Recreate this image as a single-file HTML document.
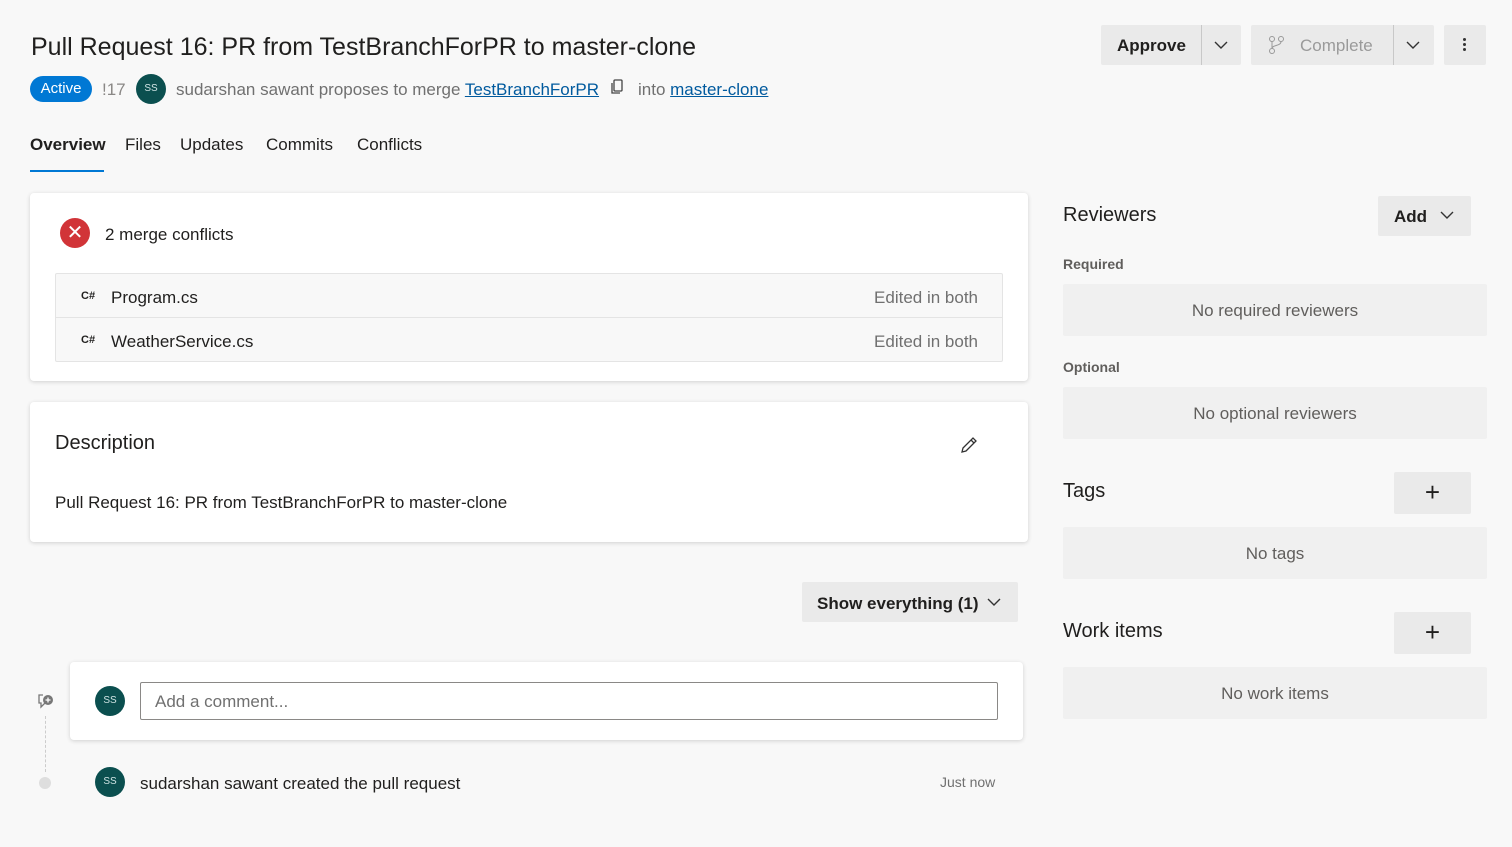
<!DOCTYPE html>
<html><head><meta charset="utf-8"><style>
*{box-sizing:border-box;margin:0;padding:0}
body{width:1512px;height:847px;background:#f8f8f8;font-family:"Liberation Sans",sans-serif;color:#201f1e;position:relative;overflow:hidden}
.a{position:absolute}
.card{position:absolute;background:#fff;border-radius:4px;box-shadow:0 1px 4px rgba(0,0,0,.16)}
.btn{position:absolute;background:#eaeaea;border-radius:2px}
.av{position:absolute;width:30px;height:30px;border-radius:50%;background:#0b4f4f;color:#cfe3e3;font-size:10px;text-align:center;line-height:30px}
.gray{position:absolute;background:#f0f0f0;border-radius:2px;color:#605e5c;font-size:17px;text-align:center}
a{color:#005a9e;text-decoration:underline}
</style></head><body>
<div class="a" style="left:31px;top:33px;font-size:25px;">Pull Request 16: PR from TestBranchForPR to master-clone</div>
<div class="a" style="left:30px;top:76px;width:62px;height:26px;border-radius:13px;background:#0078d4;color:#fff;font-size:15px;text-align:center;line-height:26px">Active</div>
<div class="a" style="left:102px;top:80px;font-size:17px;color:#8a8886">!17</div>
<div class="av" style="left:136px;top:74px">SS</div>
<div class="a" style="left:176px;top:80px;font-size:17px;color:#707070">sudarshan sawant proposes to merge <a>TestBranchForPR</a></div>
<svg class="a" style="left:610px;top:79px" width="14" height="16" viewBox="0 0 14 16"><rect x="4" y="1" width="8" height="11" rx="1" fill="none" stroke="#444" stroke-width="1.3"/><path d="M2 4v10h8" fill="none" stroke="#444" stroke-width="1.3"/></svg>
<div class="a" style="left:638px;top:80px;font-size:17px;color:#707070">into <a>master-clone</a></div>
<div class="a" style="left:30px;top:135px;font-size:17px;font-weight:bold">Overview</div>
<div class="a" style="left:30px;top:170px;width:74px;height:2px;background:#0078d4"></div>
<div class="a" style="left:125px;top:135px;font-size:17px">Files</div>
<div class="a" style="left:180px;top:135px;font-size:17px">Updates</div>
<div class="a" style="left:266px;top:135px;font-size:17px">Commits</div>
<div class="a" style="left:357px;top:135px;font-size:17px">Conflicts</div>

<div class="btn" style="left:1101px;top:25px;width:140px;height:40px"></div>
<div class="a" style="left:1201px;top:25px;width:1px;height:40px;background:#c8c8c8"></div>
<div class="a" style="left:1117px;top:36px;font-size:17px;font-weight:bold">Approve</div>
<svg class="a" style="left:1214px;top:41px" width="14" height="9"><path d="M1 1l6 6 6-6" fill="none" stroke="#333" stroke-width="1.4"/></svg>
<div class="btn" style="left:1251px;top:25px;width:183px;height:40px"></div>
<div class="a" style="left:1393px;top:25px;width:1px;height:40px;background:#c8c8c8"></div>
<svg class="a" style="left:1268px;top:35px" width="18" height="20" viewBox="0 0 18 20"><circle cx="4" cy="4" r="2.5" fill="none" stroke="#999"/><circle cx="13" cy="4" r="2.5" fill="none" stroke="#999"/><circle cx="4" cy="16" r="2.5" fill="none" stroke="#999"/><path d="M4 6.5v7M13 6.5c0 5-9 3-9 7" fill="none" stroke="#999"/></svg>
<div class="a" style="left:1300px;top:36px;font-size:17px;color:#9a9a9a">Complete</div>
<svg class="a" style="left:1406px;top:41px" width="14" height="9"><path d="M1 1l6 6 6-6" fill="none" stroke="#333" stroke-width="1.4"/></svg>
<div class="btn" style="left:1444px;top:25px;width:42px;height:40px"></div>
<div class="a" style="left:1463px;top:38px;width:3px;height:3px;background:#333;border-radius:50%;box-shadow:0 5px 0 #333,0 10px 0 #333"></div>

<div class="card" style="left:30px;top:193px;width:998px;height:188px">
 <div class="a" style="left:30px;top:25px;width:30px;height:30px;border-radius:50%;background:#d13438;color:#fff;text-align:center;line-height:30px;font-size:20px">✕</div>
 <div class="a" style="left:75px;top:32px;font-size:17px">2 merge conflicts</div>
 <div class="a" style="left:25px;top:80px;width:948px;height:89px;border:1px solid #e4e4e4;border-radius:2px;background:#f8f8f8">
  <div class="a" style="left:0;top:43px;width:946px;height:1px;background:#e4e4e4"></div>
  <div class="a" style="left:25px;top:16px;font-size:11px;font-weight:bold">C#</div>
  <div class="a" style="left:55px;top:14px;font-size:17px">Program.cs</div>
  <div class="a" style="right:24px;top:14px;font-size:17px;color:#707070">Edited in both</div>
  <div class="a" style="left:25px;top:60px;font-size:11px;font-weight:bold">C#</div>
  <div class="a" style="left:55px;top:58px;font-size:17px">WeatherService.cs</div>
  <div class="a" style="right:24px;top:58px;font-size:17px;color:#707070">Edited in both</div>
 </div>
</div>

<div class="card" style="left:30px;top:402px;width:998px;height:140px">
 <div class="a" style="left:25px;top:30px;font-size:20px">Description</div>
 <svg class="a" style="left:930px;top:34px" width="18" height="18" viewBox="0 0 18 18"><path d="M2 16l1-4L13 2l3 3L6 15z M11 4l3 3" fill="none" stroke="#333" stroke-width="1.3"/></svg>
 <div class="a" style="left:25px;top:91px;font-size:17px">Pull Request 16: PR from TestBranchForPR to master-clone</div>
</div>

<div class="btn" style="left:802px;top:582px;width:216px;height:40px"></div>
<div class="a" style="left:817px;top:594px;font-size:17px;font-weight:bold">Show everything (1)</div>
<svg class="a" style="left:987px;top:598px" width="14" height="9"><path d="M1 1l6 6 6-6" fill="none" stroke="#333" stroke-width="1.4"/></svg>

<svg class="a" style="left:36px;top:692px" width="20" height="18" viewBox="0 0 20 18"><path d="M7 3H3v8h2v4l4-4h4" fill="none" stroke="#777" stroke-width="1.3"/><circle cx="12" cy="8" r="5" fill="#777"/><path d="M12 5.5v5M9.5 8h5" stroke="#fff" stroke-width="1.3"/></svg>
<div class="a" style="left:45px;top:716px;height:56px;border-left:1px dashed #ccc"></div>
<div class="a" style="left:39px;top:777px;width:12px;height:12px;border-radius:50%;background:#dedede"></div>

<div class="card" style="left:70px;top:662px;width:953px;height:78px">
 <div class="av" style="left:25px;top:24px">SS</div>
 <div class="a" style="left:70px;top:20px;width:858px;height:38px;border:1px solid #8a8886;border-radius:2px;font-size:17px;color:#707070;padding:9px 14px">Add a comment...</div>
</div>
<div class="av" style="left:95px;top:767px">SS</div>
<div class="a" style="left:140px;top:774px;font-size:17px">sudarshan sawant created the pull request</div>
<div class="a" style="left:940px;top:774px;font-size:14px;color:#707070">Just now</div>

<div class="a" style="left:1063px;top:204px;font-size:20px">Reviewers</div>
<div class="btn" style="left:1378px;top:196px;width:93px;height:40px"></div>
<div class="a" style="left:1394px;top:207px;font-size:17px;font-weight:bold">Add</div>
<svg class="a" style="left:1440px;top:211px" width="14" height="9"><path d="M1 1l6 6 6-6" fill="none" stroke="#333" stroke-width="1.4"/></svg>
<div class="a" style="left:1063px;top:256px;font-size:14px;color:#605e5c;font-weight:bold">Required</div>
<div class="gray" style="left:1063px;top:284px;width:424px;height:52px;line-height:54px">No required reviewers</div>
<div class="a" style="left:1063px;top:359px;font-size:14px;color:#605e5c;font-weight:bold">Optional</div>
<div class="gray" style="left:1063px;top:387px;width:424px;height:52px;line-height:54px">No optional reviewers</div>
<div class="a" style="left:1063px;top:480px;font-size:20px">Tags</div>
<div class="btn" style="left:1394px;top:472px;width:77px;height:42px;text-align:center;line-height:40px;font-size:26px;font-weight:300">+</div>
<div class="gray" style="left:1063px;top:527px;width:424px;height:52px;line-height:54px">No tags</div>
<div class="a" style="left:1063px;top:620px;font-size:20px">Work items</div>
<div class="btn" style="left:1394px;top:612px;width:77px;height:42px;text-align:center;line-height:40px;font-size:26px;font-weight:300">+</div>
<div class="gray" style="left:1063px;top:667px;width:424px;height:52px;line-height:54px">No work items</div>
</body></html>
